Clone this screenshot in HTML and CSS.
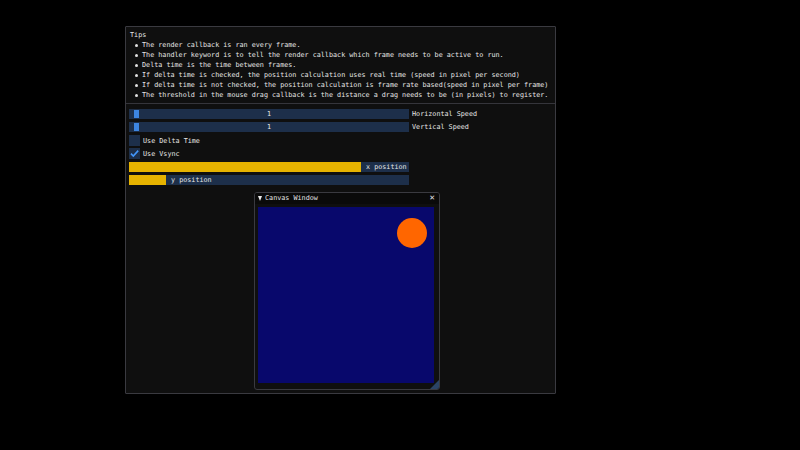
FILE: index.html
```html
<!DOCTYPE html>
<html>
<head>
<meta charset="utf-8">
<link rel="stylesheet" href="styles.css">
</head>
<body>
<div class="desktop">
  <div class="win main-win">
    <div class="tips">
      <div class="tips-title">Tips</div>
      <ul class="bullets">
        <li>The render callback is ran every frame.</li>
        <li>The handler keyword is to tell the render callback which frame needs to be active to run.</li>
        <li>Delta time is the time between frames.</li>
        <li>If delta time is checked, the position calculation uses real time (speed in pixel per second)</li>
        <li>If delta time is not checked, the position calculation is frame rate based(speed in pixel per frame)</li>
        <li>The threshold in the mouse drag callback is the distance a drag needs to be (in pixels) to register.</li>
      </ul>
    </div>
    <div class="sep"></div>
    <div class="controls">
      <div class="row">
        <div class="frame slider"><span class="grab"></span><span class="val">1</span></div>
        <span class="label">Horizontal Speed</span>
      </div>
      <div class="row">
        <div class="frame slider"><span class="grab"></span><span class="val">1</span></div>
        <span class="label">Vertical Speed</span>
      </div>
      <div class="row">
        <div class="check"></div>
        <span class="check-label">Use Delta Time</span>
      </div>
      <div class="row">
        <div class="check">
          <svg viewBox="0 0 11 11" width="11" height="11"><path d="M2 5.6 L4.3 8 L9.2 2.6" fill="none" stroke="#4296fa" stroke-width="1.6"/></svg>
        </div>
        <span class="check-label">Use Vsync</span>
      </div>
      <div class="row">
        <div class="frame progress"><span class="fill" style="width:232px"></span><span class="ptext">x position</span></div>
      </div>
      <div class="row">
        <div class="frame progress"><span class="fill" style="width:37px"></span><span class="ptext">y position</span></div>
      </div>
    </div>
  </div>

  <div class="win canvas-win">
    <div class="titlebar">
      <span class="tri"></span>
      <span class="title">Canvas Window</span>
      <span class="close">✕</span>
    </div>
    <div class="canvas-body">
      <div class="canvas">
        <div class="ball"></div>
      </div>
    </div>
    <div class="grip"></div>
  </div>
</div>
</body>
</html>
```

FILE: styles.css
```css
html, body {
  margin: 0;
  padding: 0;
  background: #000;
}
body {
  width: 800px;
  height: 450px;
  overflow: hidden;
  font-family: "DejaVu Sans Mono", "Liberation Mono", monospace;
  font-size: 6.76px;
  color: #e6e6e6;
}
.desktop {
  position: relative;
  width: 800px;
  height: 450px;
}
.win {
  position: absolute;
  box-sizing: border-box;
  background: #0f0f0f;
  border: 1px solid #3a3a40;
}
.main-win {
  left: 125px;
  top: 26px;
  width: 431px;
  height: 368px;
  padding: 3px 3px 0 3px;
  border-radius: 1px;
}
.tips-title {
  line-height: 10px;
  padding-left: 1px;
}
.bullets {
  list-style: none;
  margin: 0;
  padding: 0;
}
.bullets li {
  position: relative;
  line-height: 10px;
  padding-left: 13px;
  white-space: nowrap;
}
.bullets li::before {
  content: "";
  position: absolute;
  left: 6px;
  top: 4px;
  width: 3px;
  height: 3px;
  border-radius: 50%;
  background: #e0e0e0;
}
.sep {
  height: 1px;
  background: #35353b;
  margin: 3px -3px 5px -3px;
}
.controls {
  display: flex;
  flex-direction: column;
  gap: 3.3px;
}
.row {
  display: flex;
  align-items: center;
  height: 10px;
  line-height: 10px;
}
.frame {
  position: relative;
  width: 280px;
  height: 10px;
  background: #1d2f4a;
}
.slider {
  display: flex;
  justify-content: center;
}
.grab {
  position: absolute;
  left: 5px;
  top: 1px;
  width: 5px;
  height: 8px;
  background: #3d85e0;
}
.val {
  line-height: 10px;
}
.label {
  margin-left: 3px;
}
.check {
  width: 11px;
  height: 11px;
  background: #1d2f4a;
  display: flex;
}
.check-label {
  margin-left: 3px;
}
.progress {
  display: flex;
  align-items: center;
}
.fill {
  height: 10px;
  background: #e6b300;
}
.ptext {
  margin-left: 5px;
  line-height: 10px;
}
.canvas-win {
  left: 254px;
  top: 192px;
  width: 186px;
  height: 198px;
  border-radius: 3px;
  overflow: hidden;
}
.titlebar {
  height: 11px;
  background: #0a0a0a;
  display: flex;
  align-items: center;
  padding: 0 4px 0 3px;
  line-height: 11px;
}
.tri {
  width: 0;
  height: 0;
  border-left: 2.5px solid transparent;
  border-right: 2.5px solid transparent;
  border-top: 5px solid #ececec;
  margin-right: 3px;
}
.title {
  flex: 1;
}
.close {
  font-size: 7px;
  font-family: "DejaVu Sans", sans-serif;
}
.canvas-body {
  padding: 3px 0 0 3px;
}
.canvas {
  position: relative;
  width: 176px;
  height: 176px;
  background: #08086c;
}
.ball {
  position: absolute;
  left: 139px;
  top: 11px;
  width: 30px;
  height: 30px;
  border-radius: 50%;
  background: #ff6600;
}
.grip {
  position: absolute;
  right: 0;
  bottom: 0;
  width: 0;
  height: 0;
  border-left: 9px solid transparent;
  border-bottom: 9px solid #2b4466;
}
```
